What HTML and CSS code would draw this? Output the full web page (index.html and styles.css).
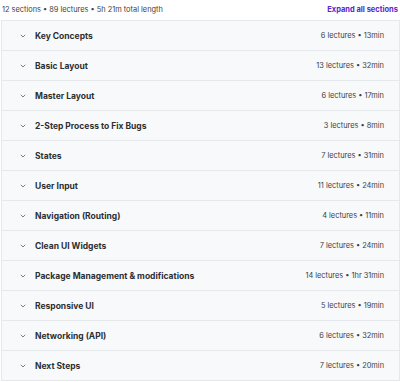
FILE: index.html
```html
<!DOCTYPE html>
<html>
<head>
<meta charset="utf-8">
<link rel="stylesheet" href="styles.css">
</head>
<body>
<div class="page">
  <div class="header">
    <span class="summary">12 sections • 89 lectures • 5h 21m total length</span>
    <span class="expand">Expand all sections</span>
  </div>
  <div class="sections">
    <div class="row"><span class="chev"><svg width="6" height="4" viewBox="0 0 6 4"><path d="M0.8 0.8l2.2 2.2 2.2-2.2" fill="none" stroke="#6a6f73" stroke-width="0.9"/></svg></span><span class="title">Key Concepts</span><span class="meta">6 lectures • 13min</span></div>
    <div class="row"><span class="chev"><svg width="6" height="4" viewBox="0 0 6 4"><path d="M0.8 0.8l2.2 2.2 2.2-2.2" fill="none" stroke="#6a6f73" stroke-width="0.9"/></svg></span><span class="title">Basic Layout</span><span class="meta">13 lectures • 32min</span></div>
    <div class="row"><span class="chev"><svg width="6" height="4" viewBox="0 0 6 4"><path d="M0.8 0.8l2.2 2.2 2.2-2.2" fill="none" stroke="#6a6f73" stroke-width="0.9"/></svg></span><span class="title">Master Layout</span><span class="meta">6 lectures • 17min</span></div>
    <div class="row"><span class="chev"><svg width="6" height="4" viewBox="0 0 6 4"><path d="M0.8 0.8l2.2 2.2 2.2-2.2" fill="none" stroke="#6a6f73" stroke-width="0.9"/></svg></span><span class="title">2-Step Process to Fix Bugs</span><span class="meta">3 lectures • 8min</span></div>
    <div class="row"><span class="chev"><svg width="6" height="4" viewBox="0 0 6 4"><path d="M0.8 0.8l2.2 2.2 2.2-2.2" fill="none" stroke="#6a6f73" stroke-width="0.9"/></svg></span><span class="title">States</span><span class="meta">7 lectures • 31min</span></div>
    <div class="row"><span class="chev"><svg width="6" height="4" viewBox="0 0 6 4"><path d="M0.8 0.8l2.2 2.2 2.2-2.2" fill="none" stroke="#6a6f73" stroke-width="0.9"/></svg></span><span class="title">User Input</span><span class="meta">11 lectures • 24min</span></div>
    <div class="row"><span class="chev"><svg width="6" height="4" viewBox="0 0 6 4"><path d="M0.8 0.8l2.2 2.2 2.2-2.2" fill="none" stroke="#6a6f73" stroke-width="0.9"/></svg></span><span class="title">Navigation (Routing)</span><span class="meta">4 lectures • 11min</span></div>
    <div class="row"><span class="chev"><svg width="6" height="4" viewBox="0 0 6 4"><path d="M0.8 0.8l2.2 2.2 2.2-2.2" fill="none" stroke="#6a6f73" stroke-width="0.9"/></svg></span><span class="title">Clean UI Widgets</span><span class="meta">7 lectures • 24min</span></div>
    <div class="row"><span class="chev"><svg width="6" height="4" viewBox="0 0 6 4"><path d="M0.8 0.8l2.2 2.2 2.2-2.2" fill="none" stroke="#6a6f73" stroke-width="0.9"/></svg></span><span class="title">Package Management &amp; modifications</span><span class="meta">14 lectures • 1hr 31min</span></div>
    <div class="row"><span class="chev"><svg width="6" height="4" viewBox="0 0 6 4"><path d="M0.8 0.8l2.2 2.2 2.2-2.2" fill="none" stroke="#6a6f73" stroke-width="0.9"/></svg></span><span class="title">Responsive UI</span><span class="meta">5 lectures • 19min</span></div>
    <div class="row"><span class="chev"><svg width="6" height="4" viewBox="0 0 6 4"><path d="M0.8 0.8l2.2 2.2 2.2-2.2" fill="none" stroke="#6a6f73" stroke-width="0.9"/></svg></span><span class="title">Networking (API)</span><span class="meta">6 lectures • 32min</span></div>
    <div class="row"><span class="chev"><svg width="6" height="4" viewBox="0 0 6 4"><path d="M0.8 0.8l2.2 2.2 2.2-2.2" fill="none" stroke="#6a6f73" stroke-width="0.9"/></svg></span><span class="title">Next Steps</span><span class="meta">7 lectures • 20min</span></div>
  </div>
</div>
</body>
</html>
```
FILE: styles.css
```css
html, body {
  margin: 0;
  padding: 0;
  background: #ffffff;
}
.page {
  width: 400px;
  font-family: "Inter", "Roboto", sans-serif;
  color: #2d2f31;
}
.header {
  display: flex;
  justify-content: space-between;
  align-items: center;
  height: 19px;
  padding: 0 2px 0 2px;
}
.summary {
  font-size: 7.4px;
  color: #3e4143;
}
.expand {
  font-size: 7.5px;
  font-weight: 700;
  color: #5624d0;
}
.sections {
  margin: 1px 0 0 1px;
  width: 397px;
  border: 1px solid #e6e9eb;
  border-bottom: none;
}
.row {
  display: flex;
  align-items: center;
  height: 29px;
  background: #f7f9fa;
  border-bottom: 1px solid #e6e9eb;
  padding: 0 15px 0 18px;
}
.chev {
  display: flex;
  width: 15px;
}
.title {
  flex: 1;
  font-size: 8.5px;
  font-weight: 700;
  color: #2d2f31;
}
.meta {
  font-size: 7.4px;
  color: #3e4143;
}
```
